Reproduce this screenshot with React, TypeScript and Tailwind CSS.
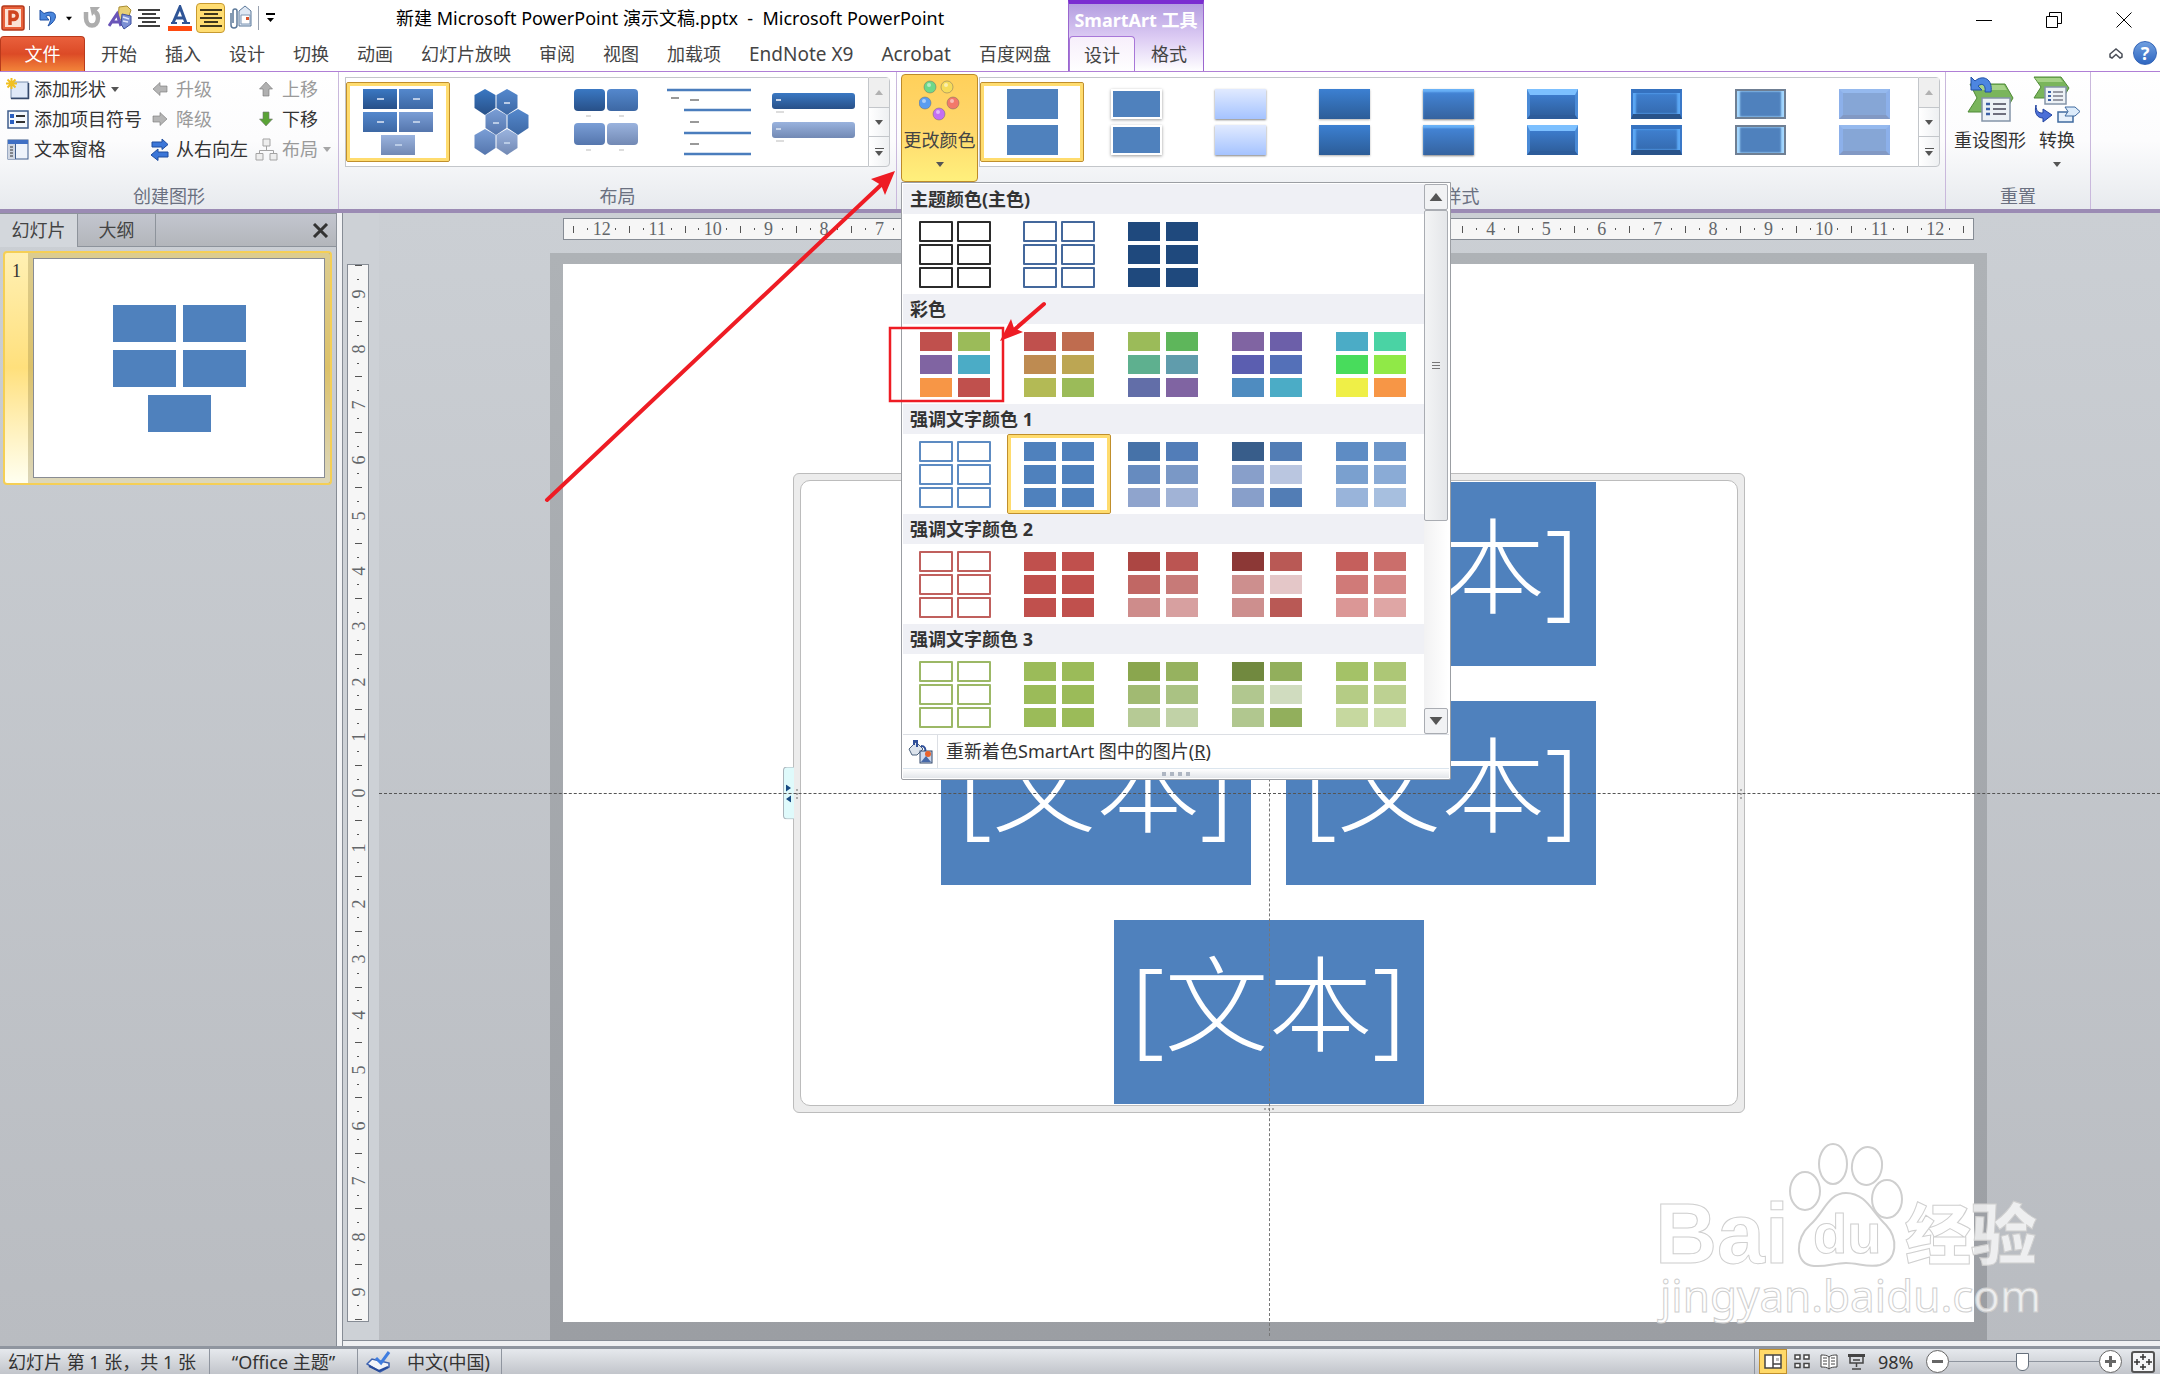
import type { ReactNode } from "react";
import clsx from "clsx";

interface Swatch {
  name: string;
  colors: string[];
  outline?: boolean;
}

interface SwatchSection {
  title: string;
  swatches: Swatch[];
}

const solid = (color: string) => Array<string>(6).fill(color);

const SECTIONS: SwatchSection[] = [
  {
    title: "主题颜色(主色)",
    swatches: [
      { name: "深色 1 轮廓", colors: solid("#2b2b2b"), outline: true },
      { name: "深色 2 轮廓", colors: solid("#44689c"), outline: true },
      { name: "深色 2 填充", colors: solid("#1f497d") },
    ],
  },
  {
    title: "彩色",
    swatches: [
      { name: "彩色 - 强调文字颜色", colors: ["#c0504d", "#9bbb59", "#8064a2", "#4bacc6", "#f79646", "#c0504d"] },
      { name: "彩色范围 2 至 3", colors: ["#c0504d", "#bf6c4f", "#be8b51", "#bca653", "#b3ba55", "#9bbb59"] },
      { name: "彩色范围 3 至 4", colors: ["#9bbb59", "#5eb65b", "#5eb08f", "#609cac", "#626ea8", "#8064a2"] },
      { name: "彩色范围 4 至 5", colors: ["#8064a2", "#6c5fa9", "#5b5eb0", "#5470b8", "#4f8cc0", "#4bacc6"] },
      { name: "彩色范围 5 至 6", colors: ["#4bacc6", "#4ad3a4", "#48dc5c", "#90e947", "#efef47", "#f79646"] },
    ],
  },
  {
    title: "强调文字颜色 1",
    swatches: [
      { name: "彩色轮廓 1", colors: solid("#5d8bc2"), outline: true },
      { name: "彩色填充 1", colors: solid("#4f81bd") },
      { name: "渐变范围 1", colors: ["#4672a8", "#527db8", "#668bbf", "#7a98c6", "#8fa4cd", "#a1b3d6"] },
      { name: "渐变循环 1", colors: ["#385d8a", "#527db5", "#889fca", "#bac6e0", "#889fca", "#527db5"] },
      { name: "透明渐变范围 1", colors: ["#5e8cc4", "#6c96ca", "#7aa0cf", "#8aabd6", "#99b4da", "#a7bfdf"] },
    ],
  },
  {
    title: "强调文字颜色 2",
    swatches: [
      { name: "彩色轮廓 2", colors: solid("#c0605d"), outline: true },
      { name: "彩色填充 2", colors: solid("#c0504d") },
      { name: "渐变范围 2", colors: ["#ac4643", "#bb5552", "#c16764", "#c77a78", "#ce8c8b", "#d7a0a0"] },
      { name: "渐变循环 2", colors: ["#8c3836", "#b95955", "#cd8f8e", "#e4c7c8", "#cd8f8e", "#b95955"] },
      { name: "透明渐变范围 2", colors: ["#c55f5c", "#cb6e6b", "#d07a78", "#d68a88", "#db9796", "#dfa6a5"] },
    ],
  },
  {
    title: "强调文字颜色 3",
    swatches: [
      { name: "彩色轮廓 3", colors: solid("#9cb866"), outline: true },
      { name: "彩色填充 3", colors: solid("#9bbb59") },
      { name: "渐变范围 3", colors: ["#8aa64e", "#96b25f", "#a1ba72", "#aac283", "#b6ca95", "#c1d2a7"] },
      { name: "渐变循环 3", colors: ["#71893f", "#92af5c", "#b1c78f", "#d0dcbf", "#b1c78f", "#92af5c"] },
      { name: "透明渐变范围 3", colors: ["#a4c267", "#adc776", "#b5cc85", "#bdd192", "#c6d89f", "#cdddac"] },
    ],
  },
];

const SELECTED_SWATCH = "彩色填充 1";

const TABS = ["开始", "插入", "设计", "切换", "动画", "幻灯片放映", "审阅", "视图", "加载项", "EndNote X9", "Acrobat", "百度网盘"];

const H_RULER = Array.from({ length: 25 }, (_, i) => Math.abs(i - 12));
const V_RULER = Array.from({ length: 19 }, (_, i) => Math.abs(i - 9));

function DownArrow({ className }: { className?: string }) {
  return (
    <svg width="8" height="5" viewBox="0 0 8 5" className={clsx("shrink-0 fill-[#555]", className)}>
      <path d="M0 0h8L4 5z" />
    </svg>
  );
}

/* ---------- title bar ---------- */

function QuickAccessBar() {
  return (
    <div className="flex items-center h-9 shrink-0">
      <svg width="24" height="26" viewBox="0 0 24 26" className="ml-px">
        <rect x="1" y="1" width="22" height="24" rx="2" fill="#e8613b" stroke="#b5381b" strokeWidth="1.5" />
        <rect x="4" y="4" width="16" height="18" fill="#fbe3d6" />
        <path d="M9 20V7h3.500a3.500 3.500 0 0 1 0 7.500h-3.500" fill="none" stroke="#cf4520" strokeWidth="3.500" />
      </svg>
      <span className="ml-[4px] h-6 w-px bg-gray-500" />
      <button aria-label="撤消" className="ml-[9px]">
        <svg width="20" height="24" viewBox="0 0 20 24">
          <path d="M1 4v10h9L7 10.500c4-3 7 1 2 9.500 11-6 10-18-4-12.500z" fill="#4a86dc" stroke="#1d4fa4" />
        </svg>
      </button>
      <button aria-label="撤消选项" className="ml-[7px]">
        <DownArrow className="fill-black w-[6px]" />
      </button>
      <button aria-label="重复" className="ml-[10px]">
        <svg width="20" height="24" viewBox="0 0 20 24">
          <path d="M4 6v6c0 10 12 10 12 0 0-3-1-5-3-6" fill="none" stroke="#adadad" strokeWidth="4.500" />
          <path d="M8 1h10l-8 9z" fill="#adadad" />
        </svg>
      </button>
      <button aria-label="艺术字" className="ml-[6px]">
        <svg width="26" height="26" viewBox="0 0 26 26">
          <path d="M11 2l8-1 4 4-3 9-10 1z" fill="#e8cf74" stroke="#a98d33" />
          <path d="M1 21L9 9l4 12M4 17h7" fill="none" stroke="#6a55b8" strokeWidth="3" />
          <path d="M14 9l9 2v8l-7 5-3-5z" fill="#7b8fd4" stroke="#3c4f9e" />
          <path d="M15 12l6 2M15 16l5 1" stroke="#dfe5fb" strokeWidth="1.500" />
        </svg>
      </button>
      <button aria-label="居中" className="ml-[4px]">
        <svg width="22" height="20" viewBox="0 0 22 20" stroke="#000" strokeWidth="1.500">
          <path d="M0 2h22M4 6h14M0 10h22M4 14h14M0 18h22" />
        </svg>
      </button>
      <button aria-label="字体颜色" className="ml-[8px]">
        <svg width="24" height="26" viewBox="0 0 24 26">
          <path d="M5 18L12 2l6 16M7 13h9" fill="none" stroke="#2f5597" strokeWidth="3" />
          <path d="M3 18h6M14 18h8" stroke="#2f5597" strokeWidth="2" />
          <rect y="21" width="24" height="5" fill="#ff4a10" />
        </svg>
      </button>
      <button aria-label="文本居中" className="ml-[4px] flex h-[30px] w-[29px] items-center justify-center rounded-sm border border-[#c79a30] bg-[#ffdd72]">
        <svg width="22" height="18" viewBox="0 0 22 18" stroke="#000" strokeWidth="1.500">
          <path d="M0 1h22M4 5h14M0 9h22M4 13h14M0 17h22" />
        </svg>
      </button>
      <button aria-label="附件" className="ml-[4px]">
        <svg width="24" height="26" viewBox="0 0 24 26">
          <path d="M10 6l6-5 6 5v15H10z" fill="#dfe8f4" stroke="#5b7899" />
          <path d="M12 10h9v9h-9z" fill="#fff" stroke="#7f96b3" />
          <path d="M17 12h3v3h-3z" fill="#d9532c" />
          <path d="M2 8v12a3 3 0 0 0 6 0V6a2 2 0 0 0-4 0v12" fill="none" stroke="#5b7899" strokeWidth="1.500" />
        </svg>
      </button>
      <span className="ml-[5px] h-6 w-px bg-gray-400" />
      <button aria-label="自定义快速访问工具栏" className="ml-[7px]">
        <svg width="9" height="10" viewBox="0 0 9 10">
          <path d="M0 0h9v2H0zM1 5h7l-3.500 4z" />
        </svg>
      </button>
    </div>
  );
}

function WindowControls() {
  return (
    <div className="flex flex-1 flex-col items-end">
      <div className="flex h-10 items-center gap-[54px] pr-[28px]">
        <button aria-label="最小化">
          <svg width="16" height="16" viewBox="0 0 16 16" stroke="#000">
            <path d="M0 8.500h16" />
          </svg>
        </button>
        <button aria-label="还原">
          <svg width="16" height="16" viewBox="0 0 16 16" fill="none" stroke="#000">
            <path d="M.5 4.500h11v11h-11zM3.500 4.500v-4h12v11h-4" />
          </svg>
        </button>
        <button aria-label="关闭">
          <svg width="16" height="16" viewBox="0 0 16 16" stroke="#000">
            <path d="M.5.5l15 15M15.500.5l-15 15" />
          </svg>
        </button>
      </div>
      <div className="flex items-center gap-[10px] pt-px pr-[3px]">
        <button aria-label="功能区最小化">
          <svg width="14" height="11" viewBox="0 0 14 11" fill="#fff" stroke="#4b4f58" strokeWidth="1.500">
            <path d="M1 6l6-5 6 5v3l-2 1-4-3.500L3 10 1 9z" />
          </svg>
        </button>
        <button
          aria-label="帮助"
          className="size-6 rounded-full border border-[#3566b8] bg-linear-to-b from-[#6f9fe0] to-[#2f66c0] text-[18px] leading-[22px] font-bold text-white"
        >
          ?
        </button>
      </div>
    </div>
  );
}

function Header() {
  return (
    <header className="flex h-[71px] bg-white">
      <div className="flex w-[1068px] shrink-0 flex-col">
        <div className="flex">
          <QuickAccessBar />
          <h1 className="ml-[121px] text-[18px] leading-9 whitespace-nowrap text-black">
            新建 Microsoft PowerPoint 演示文稿.pptx&nbsp; -&nbsp; Microsoft PowerPoint
          </h1>
        </div>
        <nav className="flex h-[35px] items-stretch text-[18px] whitespace-nowrap text-[#444]">
          <button className="mr-[2px] w-[85px] rounded-t-sm border border-b-0 border-[#b93a1c] bg-linear-to-b from-[#e9603c] via-[#dc4a26] to-[#f2843a] text-white">
            文件
          </button>
          {TABS.map((tab) => (
            <button key={tab} className={clsx("px-[14px] pt-[2px]", /^[A-Z]/.test(tab) && "text-[19px]")}>
              {tab}
            </button>
          ))}
        </nav>
      </div>
      <div className="flex w-[136px] shrink-0 flex-col border-x border-t-4 border-x-[#9a66cf] border-t-[#7a2cd1] bg-linear-to-b from-[#b49ee0] via-[#dccbf3] to-white">
        <div className="h-8 text-center text-[18px] leading-8 font-bold whitespace-nowrap text-white">SmartArt 工具</div>
        <div className="flex flex-1 text-[18px] text-[#444]">
          <button className="-mb-px w-[66px] rounded-t-sm border border-b-0 border-[#a877d8] bg-linear-to-b from-[#f7effb] to-white pt-[2px]">
            设计
          </button>
          <button className="flex-1 pt-[2px]">格式</button>
        </div>
      </div>
      <WindowControls />
    </header>
  );
}

/* ---------- ribbon ---------- */

interface RibbonGroupProps {
  label: string;
  className?: string;
  children: ReactNode;
}

function RibbonGroup({ label, className, children }: RibbonGroupProps) {
  return (
    <section className={clsx("flex flex-col border-r border-[#c9b8dc]", className)}>
      <div className="flex flex-1">{children}</div>
      <h2 className="text-center text-[18px] leading-[26px] text-[#6a7080]">{label}</h2>
    </section>
  );
}

interface CommandProps {
  icon: ReactNode;
  label: string;
  disabled?: boolean;
  menu?: boolean;
}

function Command({ icon, label, disabled, menu }: CommandProps) {
  return (
    <button
      disabled={disabled}
      className={clsx("flex h-[30px] items-center text-[18px] whitespace-nowrap", disabled ? "text-[#9a9a9a]" : "text-[#333]")}
    >
      <span className="mr-[4px] flex w-6 justify-center">{icon}</span>
      {label}
      {menu && <DownArrow className={clsx("ml-[5px]", disabled && "opacity-50")} />}
    </button>
  );
}

function BlockArrow({ color, turn }: { color: string; turn: string }) {
  return (
    <svg width="16" height="16" viewBox="0 0 16 16" className={turn}>
      <path d="M8 1l6.500 7H11v7H5V8H1.500z" fill={color} stroke="#777" strokeOpacity=".6" />
    </svg>
  );
}

function AddShapeIcon() {
  return (
    <svg width="24" height="22" viewBox="0 0 24 22">
      <rect x="5" y="4" width="17" height="16" fill="#dfe9f8" stroke="#7b8fae" />
      <path d="M5 20.500h18M22.500 5v16" stroke="#35496b" strokeWidth="1.500" />
      <path d="M5.500 0v11M0 5.500h11M1.500 1.500l8 8M9.500 1.500l-8 8" stroke="#f1c021" strokeWidth="2" />
    </svg>
  );
}

function BulletIcon() {
  return (
    <svg width="22" height="19" viewBox="0 0 22 19">
      <rect x="1" y="1" width="20" height="17" fill="#f3f7fd" stroke="#3f5d8c" strokeWidth="1.500" />
      <path d="M3 6h4M3 12h4" stroke="#2a5fc0" strokeWidth="4" />
      <path d="M9 6h9M9 12h9" stroke="#333" strokeWidth="2" />
    </svg>
  );
}

function TextPaneIcon() {
  return (
    <svg width="22" height="21" viewBox="0 0 22 21">
      <rect x="1" y="1" width="20" height="19" fill="#eef3fb" stroke="#3f5d8c" />
      <path d="M1 1h20v4H1z" fill="#3f6fc4" />
      <path d="M1 5h7v15H1z" fill="#cfd6e2" />
      <path d="M3 8h3M3 11h3M3 14h3M3 17h3" stroke="#333" />
      <path d="M8.500 5v15" stroke="#3f5d8c" />
    </svg>
  );
}

function SwapIcon() {
  return (
    <svg width="20" height="23" viewBox="0 0 20 23" fill="#3b76d8" stroke="#1f4c9e">
      <path d="M2 4h10V1l6 5.500-6 5V9H2zM18 14H8v-3l-7 6 7 5.500V19h10z" />
    </svg>
  );
}

function HierarchyIcon() {
  return (
    <svg width="23" height="23" viewBox="0 0 23 23" fill="#eee" stroke="#a3a3a3">
      <path d="M11.500 8v5M4.500 16v-3.500h14V16" fill="none" />
      <path d="M8 1h7v7H8zM1 15.500h7V22H1zM15 15.500h7V22h-7z" />
    </svg>
  );
}

function CreateGroup() {
  return (
    <RibbonGroup label="创建图形" className="w-[339px]">
      <div className="flex pt-[2px] pl-[6px]">
        <div className="flex w-[142px] flex-col items-start">
          <Command icon={<AddShapeIcon />} label="添加形状" menu />
          <Command icon={<BulletIcon />} label="添加项目符号" />
          <Command icon={<TextPaneIcon />} label="文本窗格" />
        </div>
        <div className="flex w-[106px] flex-col items-start">
          <Command icon={<BlockArrow color="#b5b5b5" turn="-rotate-90" />} label="升级" disabled />
          <Command icon={<BlockArrow color="#b5b5b5" turn="rotate-90" />} label="降级" disabled />
          <Command icon={<SwapIcon />} label="从右向左" />
        </div>
        <div className="flex flex-col items-start">
          <Command icon={<BlockArrow color="#b0b0b0" turn="rotate-0" />} label="上移" disabled />
          <Command icon={<BlockArrow color="#5aa336" turn="rotate-180" />} label="下移" />
          <Command icon={<HierarchyIcon />} label="布局" disabled menu />
        </div>
      </div>
    </RibbonGroup>
  );
}

function GalleryScroll() {
  return (
    <div className="flex w-[22px] flex-col divide-y divide-[#c3c6ca] rounded-r-sm border border-[#c3c6ca] bg-linear-to-r from-white to-[#eef0f2]">
      <button aria-label="上一行" className="flex flex-1 items-center justify-center bg-[#efefef]">
        <DownArrow className="rotate-180 opacity-40" />
      </button>
      <button aria-label="下一行" className="flex flex-1 items-center justify-center">
        <DownArrow />
      </button>
      <button aria-label="其他" className="flex flex-1 flex-col items-center justify-center gap-[2px]">
        <span className="h-px w-[9px] bg-[#555]" />
        <DownArrow />
      </button>
    </div>
  );
}

interface GalleryProps {
  names: string[];
  items: ReactNode[];
  className?: string;
}

function Gallery({ names, items, className }: GalleryProps) {
  return (
    <div className={clsx("flex h-[90px]", className)}>
      <div className="flex flex-1 items-center overflow-hidden border border-r-0 border-[#c3c6ca] bg-white">
        {items.map((item, i) => (
          <button
            key={names[i]}
            aria-label={names[i]}
            aria-pressed={i === 0}
            className={clsx(
              "flex h-20 w-[104px] shrink-0 items-center justify-center rounded-xs",
              i === 0 && "border border-[#c08f2c] shadow-[inset_0_0_0_3px_#ffdc6e]",
            )}
          >
            {item}
          </button>
        ))}
      </div>
      <GalleryScroll />
    </div>
  );
}

function ThumbGradients() {
  return (
    <svg width="0" height="0" className="absolute">
      <defs>
        <linearGradient id="tone-a" x2="0" y2="1">
          <stop stopColor="#3a78c3" />
          <stop offset="1" stopColor="#285088" />
        </linearGradient>
        <linearGradient id="tone-b" x2="0" y2="1">
          <stop stopColor="#5488cd" />
          <stop offset="1" stopColor="#3d68a4" />
        </linearGradient>
        <linearGradient id="tone-c" x2="0" y2="1">
          <stop stopColor="#7a9ed6" />
          <stop offset="1" stopColor="#5576ad" />
        </linearGradient>
        <linearGradient id="tone-d" x2="0" y2="1">
          <stop stopColor="#9ab3de" />
          <stop offset="1" stopColor="#7289b4" />
        </linearGradient>
      </defs>
    </svg>
  );
}

const HEXAGONS: [number, number, string][] = [
  [11, 14, "a"],
  [33, 14, "b"],
  [22, 34, "c"],
  [44, 34, "b"],
  [11, 54, "c"],
  [33, 54, "d"],
];

const LAYOUT_THUMBS = [
  <svg key="blocks" width="71" height="67" viewBox="0 0 71 67">
    <rect width="34" height="20" fill="url(#tone-a)" />
    <rect x="36" width="34" height="20" fill="url(#tone-b)" />
    <rect y="23" width="34" height="20" fill="url(#tone-b)" />
    <rect x="36" y="23" width="34" height="20" fill="url(#tone-c)" />
    <rect x="18" y="46" width="34" height="20" fill="url(#tone-d)" />
    <path d="M14 10h7M50 10h7M14 33h7M50 33h7M32 56h7" stroke="#b9cbe6" strokeWidth="2" />
  </svg>,
  <svg key="hex" width="56" height="68" viewBox="0 0 56 68">
    {HEXAGONS.map(([x, y, tone]) => (
      <path key={`${x}-${y}`} d={`M${x} ${y - 13}l10.500 6v13l-10.500 7l-10.500-7v-13z`} fill={`url(#tone-${tone})`} />
    ))}
    <path d="M30 15h6M19 35h6M30 55h6" stroke="#b9cbe6" strokeWidth="2" />
  </svg>,
  <svg key="round" width="64" height="66" viewBox="0 0 64 66">
    <rect width="31" height="22" rx="4" fill="url(#tone-a)" />
    <rect x="33" width="31" height="22" rx="4" fill="url(#tone-b)" />
    <rect y="34" width="31" height="22" rx="4" fill="url(#tone-c)" />
    <rect x="33" y="34" width="31" height="22" rx="4" fill="url(#tone-d)" />
    <path d="M12 27h5M45 27h5M12 61h5M45 61h5" stroke="#ddd" strokeWidth="2" />
  </svg>,
  <svg key="lines" width="86" height="70" viewBox="0 0 86 70">
    <path d="M0 3h84M17 23h67M17 46h67M17 67h67" stroke="#4a7dbd" strokeWidth="2.500" />
    <path d="M4 11h8M23 13h9M23 35h9M23 57h9" stroke="#999" strokeWidth="2" />
  </svg>,
  <svg key="bars" width="84" height="58" viewBox="0 0 84 58">
    <rect width="83" height="16" rx="3" fill="url(#tone-a)" />
    <rect y="29" width="83" height="16" rx="3" fill="url(#tone-d)" />
    <path d="M4 7h5M4 36h5" stroke="#c9d6ea" strokeWidth="2" />
    <path d="M4 19h8M4 48h8" stroke="#ddd" strokeWidth="2" />
  </svg>,
];

const STYLE_LOOKS = [
  "bg-[#4f81bd]",
  "bg-[#4f81bd] border-2 border-white shadow-[0_1px_3px_rgba(0,0,0,0.4)]",
  "bg-linear-to-b from-[#e1eaff] to-[#a5c3ff] shadow-[0_1px_2px_rgba(0,0,0,0.5)]",
  "bg-linear-to-b from-[#3c80d2] to-[#2c5d98] shadow-[0_1px_2px_rgba(0,0,0,0.3)]",
  "bg-linear-to-b from-[#4588dc] to-[#35639f] shadow-[inset_0_3px_2px_#6ab2f7,0_1px_2px_rgba(0,0,0,0.5)]",
  "bg-linear-to-b from-[#3c7bcb] to-[#2f609f] border-x-3 border-t-6 border-b-4 border-t-[#7cc0ff] border-x-[#4a8ad6] border-b-[#2d5c9a]",
  "bg-linear-to-b from-[#3f80d0] to-[#356bb0] border-x-2 border-t-4 border-b-5 border-x-[#3a78c8] border-t-[#3572c0] border-b-[#295389] shadow-[inset_3px_0_2px_#5ba8f5,inset_-3px_0_2px_#5ba8f5]",
  "bg-[#4f81bd] border-2 border-[#6f7f93] shadow-[inset_3px_0_2px_#a5d8ff,inset_-3px_0_2px_#a5d8ff]",
  "bg-[#86a6d6] border-4 border-t-[#95b9ee] border-x-[#8cb0ea] border-b-[#8299c4]",
];

const STYLE_THUMBS = STYLE_LOOKS.map((look) => (
  <span key={look} className="flex flex-col gap-[6px]">
    <span className={clsx("h-[30px] w-[51px]", look)} />
    <span className={clsx("h-[30px] w-[51px]", look)} />
  </span>
));

function LayoutGroup() {
  return (
    <RibbonGroup label="布局" className="w-[558px]">
      <Gallery
        className="mt-[5px] ml-[6px] w-[545px]"
        names={["默认图形", "交替六边形", "标题图片块", "表层次结构", "垂直块列表"]}
        items={LAYOUT_THUMBS}
      />
    </RibbonGroup>
  );
}

const DOTS = [
  ["#6fd88a", 11, 6],
  ["#f6dc5a", 28, 6],
  ["#5b9df0", 6, 22],
  ["#f3796a", 34, 22],
  ["#c46ff2", 20, 33],
] as const;

function StyleGroup() {
  return (
    <RibbonGroup label="SmartArt 样式" className="min-w-0 flex-1">
      <div className="relative ml-[4px] flex">
        <button
          aria-haspopup="menu"
          aria-expanded="true"
          className="mt-[2px] flex h-[108px] w-[77px] flex-col items-center rounded-sm border border-[#bd8b28] bg-linear-to-b from-[#ffd05a] via-[#ffd76c] to-[#fff07c] text-[18px] whitespace-nowrap text-[#444]"
        >
          <svg width="41" height="42" viewBox="0 0 41 42" className="mt-[4px]">
            {DOTS.map(([fill, x, y]) => (
              <circle key={fill} cx={x} cy={y + 2} r="6" fill={fill} stroke="#666" strokeOpacity=".45" />
            ))}
            {DOTS.map(([fill, x, y]) => (
              <circle key={fill} cx={x - 1} cy={y} r="2" fill="#fff" fillOpacity=".5" />
            ))}
          </svg>
          <span className="mt-[5px] leading-[28px]">更改颜色</span>
          <DownArrow className="mt-[8px]" />
        </button>
        <ColorMenu />
      </div>
      <Gallery
        className="mt-[5px] mr-[5px] ml-px min-w-0 flex-1"
        names={["简单填充", "白色轮廓", "细微效果", "中等效果", "强烈效果", "优雅", "嵌入", "砖块场景", "平面场景"]}
        items={STYLE_THUMBS}
      />
    </RibbonGroup>
  );
}

function ResetGroup() {
  return (
    <RibbonGroup label="重置" className="w-[145px]">
      <div className="flex w-full gap-[7px] pt-[4px] pl-[8px] text-[18px] whitespace-nowrap text-[#333]">
        <button className="flex flex-col items-center">
          <svg width="48" height="47" viewBox="0 0 48 47">
            <path d="M4 8h35l8 14-8 14H2l9-14z" fill="#7ab55c" stroke="#4f8a37" />
            <path d="M5 9h33l3 5H8z" fill="#a5d287" />
            <rect x="16" y="22" width="28" height="23" fill="#edf2f6" stroke="#8494a8" strokeWidth="1.500" />
            <path d="M20 28h4M20 33h4M20 38h4" stroke="#3b5fa5" strokeWidth="2.500" />
            <path d="M27 28h13M27 33h13M27 38h13" stroke="#445" strokeWidth="1.500" />
            <path d="M5 1v13h11l-4-4c5-4 8 0 7 6h6C27 3 17-2 9 5z" fill="#4d86e0" stroke="#2350a5" />
          </svg>
          <span className="mt-[3px] leading-[28px]">重设图形</span>
        </button>
        <button className="flex flex-col items-center">
          <svg width="48" height="47" viewBox="0 0 48 47">
            <path d="M1 1h27l8 11-6 10H1l7-11z" fill="#7ab55c" stroke="#4f8a37" />
            <path d="M2 2h25l3 4H5z" fill="#a5d287" />
            <rect x="12" y="11" width="21" height="17" fill="#edf2f6" stroke="#8494a8" strokeWidth="1.500" />
            <path d="M15 16h3M15 20h3M15 24h3" stroke="#3b5fa5" strokeWidth="2" />
            <path d="M20 16h10M20 20h10M20 24h10" stroke="#445" />
            <path d="M3 29c0 7 3 8 7 8v-4l9 6-9 7v-4C4 42 1 37 3 29z" fill="#4d70d8" stroke="#2344a0" />
            <rect x="25" y="36" width="15" height="10" fill="#e8f1fb" stroke="#3f6a9f" strokeWidth="1.500" />
            <path d="M32 31h10l5 4.500-5 4.500H32l3-4.500z" fill="#dcebfa" stroke="#3f6a9f" />
          </svg>
          <span className="mt-[3px] leading-[28px]">转换</span>
          <DownArrow className="mt-[8px]" />
        </button>
      </div>
    </RibbonGroup>
  );
}

function Ribbon() {
  return (
    <div className="flex h-[142px] border-t border-b-4 border-t-[#b07fd6] border-b-[#9b8bb4] bg-linear-to-b from-white via-[#fcfcfd] to-[#e7eaee]">
      <CreateGroup />
      <LayoutGroup />
      <StyleGroup />
      <ResetGroup />
      <div className="w-[69px]" />
    </div>
  );
}

/* ---------- colour menu ---------- */

function SwatchButton({ swatch }: { swatch: Swatch }) {
  const selected = swatch.name === SELECTED_SWATCH;
  return (
    <button
      role="menuitemradio"
      aria-checked={selected}
      aria-label={swatch.name}
      className={clsx(
        "flex h-20 w-[104px] items-center justify-center rounded-xs",
        selected && "border border-[#c08f2c] shadow-[inset_0_0_0_3px_#ffdc6e]",
      )}
    >
      <span className="grid grid-cols-2 gap-x-[4px] gap-y-[2px]">
        {swatch.colors.map((color, i) =>
          swatch.outline ? (
            <span key={i} className="h-[21px] w-[34px] rounded-[1px] border-2 bg-white" style={{ borderColor: color }} />
          ) : (
            <span key={i} className="m-px h-[19px] w-[32px]" style={{ backgroundColor: color }} />
          ),
        )}
      </span>
    </button>
  );
}

function ColorMenu() {
  return (
    <div
      role="menu"
      aria-label="更改颜色"
      className="absolute top-[110px] left-0 z-20 w-[550px] rounded-b-xs border border-[#9b9ea3] bg-white p-px text-[18px] text-[#333]"
    >
      <div className="flex h-[551px] border-b border-[#dcdfe4]">
        <div className="flex-1">
          {SECTIONS.map((section) => (
            <section key={section.title}>
              <h3 className="h-[30px] bg-[#eff0f5] pl-[7px] leading-[30px] font-bold">{section.title}</h3>
              <div className="flex">
                {section.swatches.map((swatch) => (
                  <SwatchButton key={swatch.name} swatch={swatch} />
                ))}
              </div>
            </section>
          ))}
        </div>
        <div className="mr-px flex w-6 flex-col bg-linear-to-r from-[#f2f2f3] to-white">
          <button aria-label="向上滚动" className="flex h-[26px] items-center justify-center rounded-xs border border-[#a9acb2] bg-[#f1f2f4]">
            <DownArrow className="h-2 w-[14px] rotate-180 fill-[#454f73]" />
          </button>
          <div className="flex h-[311px] flex-col items-center justify-center gap-[2px] rounded-xs border border-[#a9acb2] bg-linear-to-r from-[#f3f4f5] to-[#e4e6e9]">
            <span className="h-px w-2 bg-[#777]" />
            <span className="h-px w-2 bg-[#777]" />
            <span className="h-px w-2 bg-[#777]" />
          </div>
          <button
            aria-label="向下滚动"
            className="mt-auto flex h-[26px] items-center justify-center rounded-xs border border-[#a9acb2] bg-[#f1f2f4]"
          >
            <DownArrow className="h-2 w-[14px] fill-[#454f73]" />
          </button>
        </div>
      </div>
      <button role="menuitem" className="flex h-[33px] w-full items-center">
        <span className="flex h-full w-[35px] items-center justify-center border-r border-[#dcdfe4]">
          <svg width="25" height="24" viewBox="0 0 25 24">
            <path d="M1 9l7-7 7 7-6 6H4z" fill="#dce3ec" stroke="#4c627f" />
            <path d="M6 5V1h3v6M13 6c4 0 5 3 4 6" fill="none" stroke="#2f4f9a" strokeWidth="2" />
            <rect x="12" y="11" width="12" height="12" fill="#cdd9ee" stroke="#31466b" />
            <circle cx="20" cy="14" r="3" fill="#e9622c" />
            <path d="M13 22l5-6 5 6z" fill="#4668a8" />
          </svg>
        </span>
        <span className="pl-2">
          重新着色SmartArt 图中的图片(<u>R</u>)
        </span>
      </button>
      <div className="flex h-[10px] items-center justify-center gap-[4px] border-t border-[#dbe5ee] bg-linear-to-b from-white to-[#e3e6ea]">
        <span className="size-[4px] bg-[#aeb6c2]" />
        <span className="size-[4px] bg-[#aeb6c2]" />
        <span className="size-[4px] bg-[#aeb6c2]" />
        <span className="size-[4px] bg-[#aeb6c2]" />
      </div>
    </div>
  );
}

/* ---------- slide pane ---------- */

function SlidePane() {
  return (
    <aside className="flex w-[343px] shrink-0 flex-col border-r border-[#868c95]">
      <div className="flex flex-1 flex-col border-r-5 border-[#f2f3f5]">
        <div className="flex h-[34px] shrink-0 border-t border-[#8d939b] bg-linear-to-b from-[#c3c6cf] to-[#b2b5ba] text-[18px] text-[#444]">
          <button className="w-[78px] border-r border-[#8d939b] bg-[#d3d7dc]">幻灯片</button>
          <button className="w-[78px] border-r border-b border-[#8d939b]">大纲</button>
          <div className="flex flex-1 items-center justify-end border-r border-b border-[#8d939b] pr-[7px]">
            <button aria-label="关闭窗格">
              <svg width="17" height="15" viewBox="0 0 17 15" stroke="#333" strokeWidth="3">
                <path d="M2 1l13 13M15 1L2 14" />
              </svg>
            </button>
          </div>
        </div>
        <div className="flex-1 border-r border-[#868c95] pt-[4px] pr-[4px] pl-[3px]">
          <button
            aria-label="幻灯片 1"
            className="flex h-[234px] w-full rounded-sm border-2 border-[#f5cf55] bg-linear-to-b from-[#fff0b3] via-[#ffe07c] to-[#fffff0]"
          >
            <span className="w-[23px] pt-[6px] text-center font-['Liberation_Serif'] text-[18px] leading-6 text-[#333]">1</span>
            <span className="flex h-full flex-1 bg-[#8a7b40]/30 p-[5px]">
              <span className="flex flex-1 flex-col items-center justify-center gap-2 border border-[#888c94] bg-white">
                {[2, 2, 1].map((count, row) => (
                  <span key={row} className="flex gap-[7px]">
                    {Array.from({ length: count }, (_, i) => (
                      <span key={i} className="h-[37px] w-[63px] bg-[#4f81bd]" />
                    ))}
                  </span>
                ))}
              </span>
            </span>
          </button>
        </div>
      </div>
    </aside>
  );
}

/* ---------- rulers and canvas ---------- */

function HorizontalRuler() {
  return (
    <div className="flex h-[22px] border border-[#868c95] bg-[#f6f6f6] px-[3px] font-['Liberation_Serif'] text-[18px] leading-5 text-[#63666a]">
      {H_RULER.map((n, i) => (
        <div key={i} className="grid flex-1 basis-0 grid-cols-4 items-center justify-items-center">
          <span className="h-[7px] w-px bg-[#555]" />
          <span className="h-[2px] w-px bg-[#555]" />
          <span className="flex w-0 justify-center">{n}</span>
          <span className="h-[2px] w-px bg-[#555]" />
        </div>
      ))}
      <div className="flex w-[14px] items-center justify-center">
        <span className="h-[7px] w-px bg-[#555]" />
      </div>
    </div>
  );
}

function VerticalRuler() {
  return (
    <div className="flex h-full w-[22px] flex-col overflow-hidden border border-[#868c95] bg-[#f6f6f6] font-['Liberation_Serif'] text-[18px] text-[#63666a]">
      <div className="-my-[6px] flex flex-1 flex-col">
        {V_RULER.map((n, i) => (
          <div key={i} className="grid flex-1 basis-0 grid-rows-4 items-center justify-items-center">
            <span className="h-px w-[7px] bg-[#555]" />
            <span className="h-px w-[2px] bg-[#555]" />
            <span className="flex h-0 items-center">
              <span className="-rotate-90 leading-5">{n}</span>
            </span>
            <span className="h-px w-[2px] bg-[#555]" />
          </div>
        ))}
        <div className="flex h-[14px] items-center justify-center">
          <span className="h-px w-[7px] bg-[#555]" />
        </div>
      </div>
    </div>
  );
}

function SmartArtBlock() {
  return (
    <div className="flex h-[184px] w-[310px] items-center justify-center bg-[#4f81bd] pb-4 text-[104px] leading-none font-light whitespace-nowrap text-white">
      [文本]
    </div>
  );
}

function FrameGrip({ className }: { className: string }) {
  return (
    <span className={clsx("absolute flex gap-[2px]", className)}>
      <i className="size-[2px] bg-[#aaa]" />
      <i className="size-[2px] bg-[#aaa]" />
      <i className="size-[2px] bg-[#aaa]" />
    </span>
  );
}

function SmartArt() {
  return (
    <div className="relative rounded-md border border-[#bcbcbc] bg-[#ececec] p-[6px]">
      <div className="flex w-[938px] flex-col items-center gap-[35px] rounded-[10px] border border-[#bcbcbc] bg-white px-4 py-px">
        {[2, 2, 1].map((count, row) => (
          <div key={row} className="flex gap-[35px]">
            {Array.from({ length: count }, (_, i) => (
              <SmartArtBlock key={i} />
            ))}
          </div>
        ))}
      </div>
      <FrameGrip className="bottom-[2px] left-1/2 -translate-x-1/2" />
      <FrameGrip className="top-1/2 left-[-2px] rotate-90" />
      <FrameGrip className="top-1/2 right-[-2px] rotate-90" />
      <button
        aria-label="文本窗格"
        className="absolute top-1/2 -left-[11px] flex h-[53px] w-[11px] -translate-y-1/2 flex-col items-center justify-center gap-[5px] rounded-l-sm border border-r-0 border-[#a9b4bb] bg-[#dffafb]"
      >
        <svg width="5" height="18" viewBox="0 0 5 18" fill="#174a82">
          <path d="M0 0l5 3.500L0 7zM5 11v7l-5-3.500z" />
        </svg>
      </button>
    </div>
  );
}

function Watermark() {
  return (
    <svg
      width="400"
      height="200"
      viewBox="0 0 400 200"
      className="pointer-events-none absolute right-[108px] bottom-[8px] fill-white/75 stroke-[#cfcfcf]"
    >
      <g strokeWidth="2">
        <ellipse cx="153" cy="53" rx="15" ry="19" />
        <ellipse cx="181" cy="26" rx="14" ry="20" />
        <ellipse cx="215" cy="28" rx="15" ry="19" transform="rotate(8 215 28)" />
        <ellipse cx="235" cy="61" rx="15" ry="19" />
        <path d="M194 55c-18 0-22 20-36 32-15 13-16 40 4 41 14 1 20-3 32-3s22 5 34 2c18-5 18-27 6-40-14-13-20-32-40-32z" />
      </g>
      <g strokeWidth="1">
        <text x="3" y="125" className="font-['Liberation_Sans'] text-[86px] font-bold">
          Bai
        </text>
        <text x="161" y="115" className="font-['Liberation_Sans'] text-[56px] font-bold">
          du
        </text>
        <text x="253" y="121" className="font-['Noto_Sans_CJK_SC'] text-[66px] font-black">
          经验
        </text>
        <text x="8" y="174" className="font-['Noto_Sans'] text-[44px]">
          jingyan.baidu.com
        </text>
      </g>
    </svg>
  );
}

function Workspace() {
  return (
    <main className="relative flex min-w-0 flex-1 flex-col">
      <div className="flex flex-1">
        <div className="w-[36px] bg-[#cdd1d6] pt-[51px] pb-[18px] pl-[4px]">
          <VerticalRuler />
        </div>
        <div className="flex min-w-0 flex-1 flex-col">
          <div className="h-[40px] pt-[5px] pr-[186px] pl-[184px]">
            <HorizontalRuler />
          </div>
          <div className="flex flex-1 overflow-hidden pr-[173px] pl-[171px]">
            <div className="flex flex-1 bg-linear-to-b from-[#aeb2b6] to-[#9b9ea3] px-[13px] pt-[11px] pb-[18px]">
              <div className="relative flex flex-1 items-center justify-center bg-white">
                <SmartArt />
                <div className="absolute top-1/2 -right-[186px] -left-[184px] border-t border-dashed border-[#555]" />
                <div className="absolute top-0 -bottom-[14px] left-1/2 border-l border-dashed border-[#777]" />
              </div>
            </div>
          </div>
        </div>
      </div>
      <div className="h-[6px] border-t border-[#868c95] bg-[#eff0f2]" />
      <Watermark />
    </main>
  );
}

/* ---------- status bar ---------- */

function StatusBar() {
  return (
    <footer className="flex h-[28px] shrink-0 items-stretch border-t-3 border-[#8f959f] bg-linear-to-b from-[#e6e9ed] to-[#c2c5cb] text-[18px] leading-[26px] whitespace-nowrap text-[#333]">
      <span className="w-[210px] border-r border-[#8f959f] pl-2">幻灯片 第 1 张，共 1 张</span>
      <span className="w-[148px] border-r border-[#8f959f] text-center">“Office 主题”</span>
      <span className="flex w-[144px] items-center border-r border-[#8f959f] pl-2">
        <svg width="25" height="22" viewBox="0 0 25 22" className="mr-[16px] shrink-0">
          <path d="M1 13l5-5 8 2 9 2v4l-9 5z" fill="#f3f5f9" stroke="#3d62b0" strokeWidth="1.500" />
          <path d="M3 15l10 5 9-4" fill="none" stroke="#274b9b" strokeWidth="2" />
          <path d="M10 7l5 5 8-11" fill="none" stroke="#3f7de0" strokeWidth="3" />
        </svg>
        中文(中国)
      </span>
      <div className="ml-auto flex items-center border-l border-[#8f959f] pl-[4px]">
        <button aria-label="普通视图" className="flex h-full w-[28px] items-center justify-center border border-[#c08f2c] bg-[#ffd968]">
          <svg width="18" height="15" viewBox="0 0 18 15" fill="#fff" stroke="#444" strokeWidth="1.500">
            <path d="M1 1h16v13H1zM9 1v13M9 10h8" />
            <path d="M12 4h3v3h-3z" fill="#bbb" stroke="none" />
          </svg>
        </button>
        <button aria-label="幻灯片浏览" className="ml-[7px]">
          <svg width="16" height="15" viewBox="0 0 16 15" fill="#fff" stroke="#444" strokeWidth="1.500">
            <path d="M1 1h5v4H1zM10 1h5v4h-5zM1 9.500h5v4H1zM10 9.500h5v4h-5z" />
          </svg>
        </button>
        <button aria-label="阅读视图" className="ml-[10px]">
          <svg width="18" height="16" viewBox="0 0 18 16" fill="#fff" stroke="#444">
            <path d="M1 1c3 0 6 0 8 2 2-2 5-2 8-2v12c-3 0-6 0-8 2-2-2-5-2-8-2zM9 3v12M3 4h4M3 7h4M3 10h4M11 4h4M11 7h4M11 10h4" />
          </svg>
        </button>
        <button aria-label="幻灯片放映" className="ml-[10px]">
          <svg width="17" height="16" viewBox="0 0 17 16" stroke="#444" fill="none" strokeWidth="1.500">
            <path d="M0 1.500h17" strokeWidth="3" />
            <path d="M2 2v7h13V2M5 6h7M8.500 9v4M4 15h9" />
          </svg>
        </button>
        <span className="ml-[13px] w-[48px]">98%</span>
        <button aria-label="缩小" className="flex size-[23px] items-center justify-center rounded-full border border-[#666] bg-white">
          <span className="h-[3px] w-[11px] bg-[#666]" />
        </button>
        <input
          type="range"
          aria-label="显示比例"
          min={10}
          max={190}
          defaultValue={98}
          className="h-5 w-[150px] appearance-none bg-[linear-gradient(#8f959f,#8f959f)] bg-size-[100%_1px] bg-center bg-no-repeat [&::-webkit-slider-thumb]:h-[18px] [&::-webkit-slider-thumb]:w-[13px] [&::-webkit-slider-thumb]:appearance-none [&::-webkit-slider-thumb]:rounded-b-md [&::-webkit-slider-thumb]:border [&::-webkit-slider-thumb]:border-[#66707c] [&::-webkit-slider-thumb]:bg-white"
        />
        <button aria-label="放大" className="flex size-[23px] items-center justify-center rounded-full border border-[#666] bg-white">
          <svg width="11" height="11" viewBox="0 0 11 11" stroke="#666" strokeWidth="3">
            <path d="M0 5.500h11M5.500 0v11" />
          </svg>
        </button>
        <button aria-label="使幻灯片适应当前窗口" className="mr-[5px] ml-[9px]">
          <svg width="24" height="22" viewBox="0 0 24 22" fill="#f5f6f8" stroke="#555" strokeWidth="2">
            <rect x="1" y="1" width="22" height="20" rx="2" />
            <path d="M12 3v6M9 6h6M12 13v6M9 16h6M3 11h6M6 8v6M15 11h6M18 8v6" stroke="#333" strokeWidth="1.500" />
          </svg>
        </button>
      </div>
    </footer>
  );
}

/* Red marks pointing at the colour button and the first colourful swatch. */
function Annotations() {
  return (
    <svg className="pointer-events-none absolute top-0 left-0 z-30" width="1100" height="520" viewBox="0 0 1100 520">
      <g stroke="#ee1c24" strokeLinecap="round" fill="none">
        <rect x="890" y="328" width="113" height="73" strokeWidth="2.500" />
        <path d="M547 500L882 184" strokeWidth="4" />
        <path d="M1044 304L1014 330" strokeWidth="4" />
      </g>
      <path d="M895 171l-24 8 10 6 4 10zM1000 341l11-22 3 9 9 4z" fill="#ee1c24" />
    </svg>
  );
}

export default function App() {
  return (
    <div className="relative flex min-h-screen flex-col overflow-hidden bg-white font-['Noto_Sans','Noto_Sans_CJK_SC',sans-serif]">
      <ThumbGradients />
      <Header />
      <Ribbon />
      <div className="flex flex-1 bg-linear-to-b from-[#cbcfd4] to-[#b9bcc1]">
        <SlidePane />
        <Workspace />
      </div>
      <StatusBar />
      <Annotations />
    </div>
  );
}
